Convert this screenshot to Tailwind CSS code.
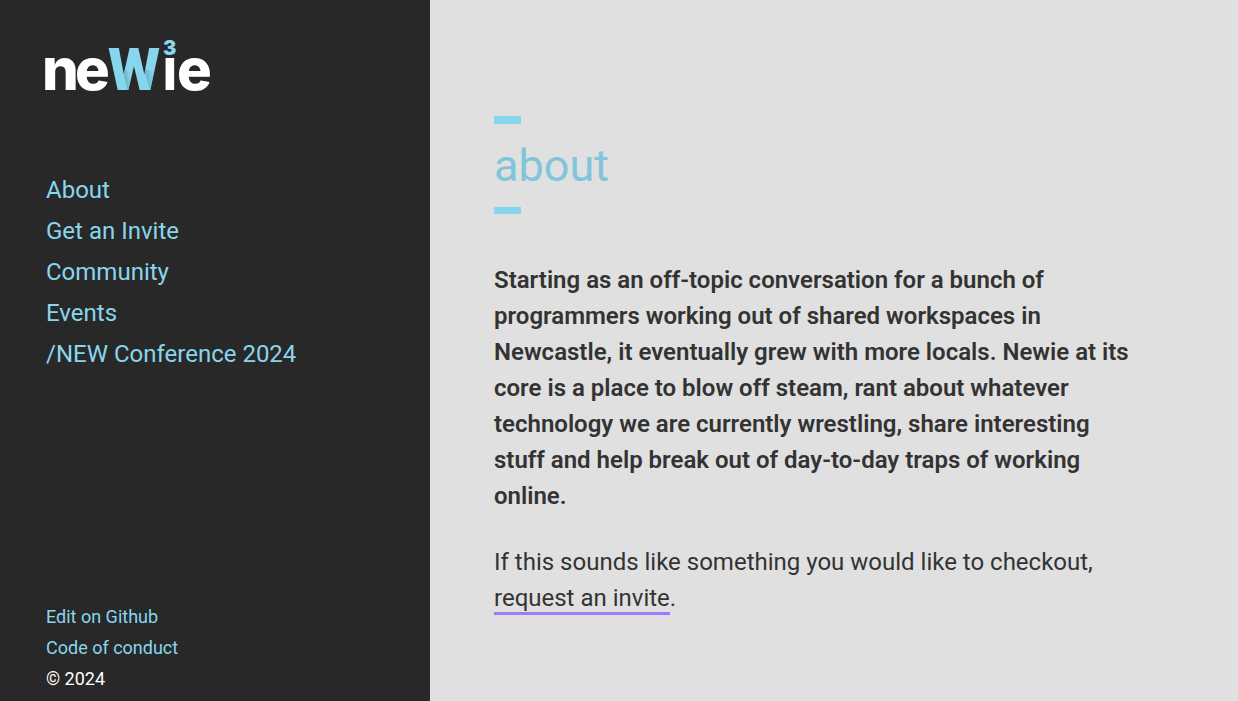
<!DOCTYPE html>
<html lang="en">
<head>
<meta charset="utf-8">
<meta name="viewport" content="width=device-width, initial-scale=1">
<title>Newie – About</title>
<script src="https://cdn.jsdelivr.net/npm/@tailwindcss/browser@4"></script>
</head>
<body class="flex min-h-screen bg-[#e0e0e0] font-['Roboto',sans-serif] text-2xl text-[#333] antialiased">
  <aside class="flex w-[430px] shrink-0 flex-col bg-[#282828] px-[46px] pt-9 text-[#88d6ed]">
    <a href="#" aria-label="Newie home" class="-ml-1 block w-44">
      <svg class="block h-15 w-44 overflow-visible" viewBox="0 0 176 60" role="img" aria-label="Newie" font-family="Inter, sans-serif" font-weight="800">
        <defs>
          <linearGradient id="fold" x1="0" y1=".6" x2="1" y2=".3">
            <stop offset=".2" stop-color="#6ab4ca"/>
            <stop offset=".8" stop-color="#6ab4ca" stop-opacity="0"/>
          </linearGradient>
          <clipPath id="w-shape">
            <text x="66" y="54" font-size="60" font-family="Roboto, sans-serif" font-weight="900">W</text>
          </clipPath>
        </defs>
        <g font-size="58" fill="#fffffd">
          <text x="0" y="54">n</text>
          <text x="33" y="54">e</text>
          <text x="66" y="54" font-size="60" font-family="Roboto, sans-serif" font-weight="900" fill="#88d6ed">W</text>
          <text x="120" y="54" font-weight="700">ı</text>
          <text x="135" y="54">e</text>
        </g>
        <g fill="url(#fold)" clip-path="url(#w-shape)">
          <path d="M81 33 91 37 87 54H85Z"/>
          <path d="M102 33 115 37 110 54H108Z"/>
        </g>
        <text x="121" y="19" font-size="20" font-weight="900" fill="#88d6ed">3</text>
      </svg>
    </a>
    <nav class="mt-[74px] flex flex-col items-start leading-[41px]" aria-label="Main">
      <a href="#about">About</a>
      <a href="#invite">Get an Invite</a>
      <a href="#community">Community</a>
      <a href="#events">Events</a>
      <a href="#conference">/NEW Conference 2024</a>
    </nav>
    <footer class="mt-auto flex flex-col items-start pb-[7px] text-lg leading-[31px]">
      <a href="#edit">Edit on Github</a>
      <a href="#conduct">Code of conduct</a>
      <p class="text-[#fffffd]">© 2024</p>
    </footer>
  </aside>
  <main class="min-w-0 flex-1 px-16 pt-29" id="about">
    <div class="h-2 w-[27px] bg-[#88d6ed]"></div>
    <h1 class="my-3.5 text-[45px] leading-[55px] text-[#80c5da]">about</h1>
    <div class="h-[7px] w-[27px] bg-[#88d6ed]"></div>
    <p class="mt-12 max-w-[640px] leading-9 font-semibold">Starting as an off-topic conversation for a bunch of programmers working out of shared workspaces in Newcastle, it eventually grew with more locals. Newie at its core is a place to blow off steam, rant about whatever technology we are currently wrestling, share interesting stuff and help break out of day-to-day traps of working online.</p>
    <p class="mt-[30px] max-w-[640px] leading-9">If this sounds like something you would like to checkout, <a href="#invite" class="border-b-3 border-[#9f7aff]">request an invite</a>.</p>
  </main>
</body>
</html>
